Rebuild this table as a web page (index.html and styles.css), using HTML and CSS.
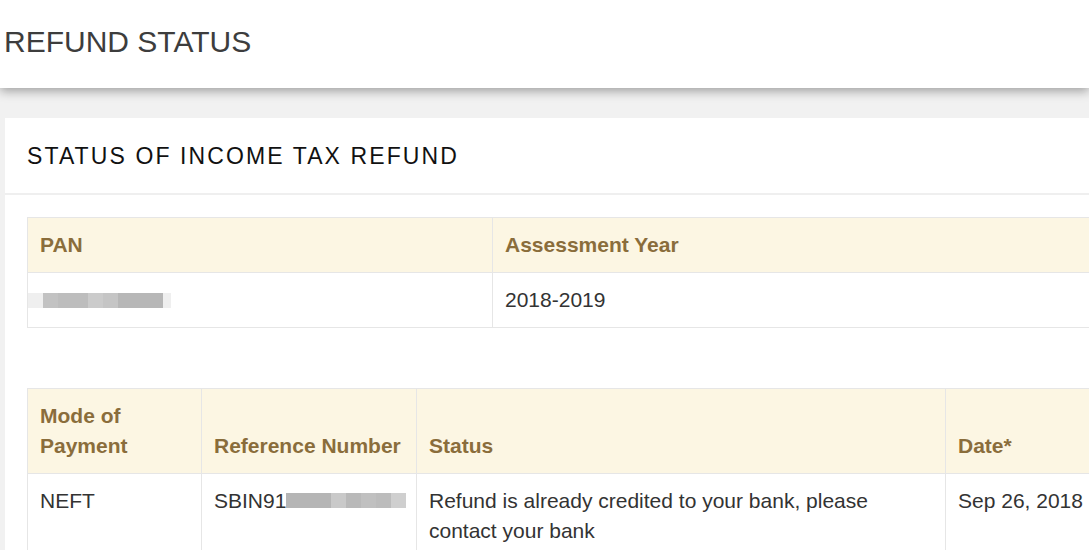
FILE: index.html
```html
<!DOCTYPE html>
<html>
<head>
<meta charset="utf-8">
<title>Refund Status</title>
<link rel="stylesheet" href="styles.css">
</head>
<body>
<header class="page-header">
  <h1 class="page-title">REFUND STATUS</h1>
</header>
<main class="page-main">
  <section class="card">
    <div class="card-header">
      <h2 class="card-title">STATUS OF INCOME TAX REFUND</h2>
    </div>
    <div class="card-body">
      <table class="info-table pan-table">
        <colgroup><col class="c-pan"><col></colgroup>
        <thead>
          <tr><th>PAN</th><th>Assessment Year</th></tr>
        </thead>
        <tbody>
          <tr>
            <td><span class="blur pan-blur"><i class="b1"></i><i class="b2"></i><i class="b3"></i><i class="b4"></i><i class="b5"></i><i class="b6"></i><i class="b7"></i></span></td>
            <td>2018-2019</td>
          </tr>
        </tbody>
      </table>
      <table class="info-table pay-table">
        <colgroup><col class="c-mode"><col class="c-ref"><col class="c-status"><col></colgroup>
        <thead>
          <tr><th>Mode of<br>Payment</th><th>Reference Number</th><th>Status</th><th>Date*</th></tr>
        </thead>
        <tbody>
          <tr>
            <td>NEFT</td>
            <td class="ref">SBIN91<span class="blur ref-blur"><i class="r1"></i><i class="r2"></i><i class="r3"></i><i class="r4"></i><i class="r5"></i><i class="r6"></i></span></td>
            <td>Refund is already credited to your bank, please contact your bank</td>
            <td>Sep 26, 2018</td>
          </tr>
        </tbody>
      </table>
    </div>
  </section>
</main>
</body>
</html>
```
FILE: styles.css
```css
html, body {
  margin: 0;
  padding: 0;
  overflow: hidden;
}
body {
  background: #f1f1f1;
  font-family: "Liberation Sans", Arial, sans-serif;
  color: #333;
  width: 1089px;
  height: 550px;
}
.page-header {
  position: relative;
  z-index: 2;
  height: 88px;
  background: #fff;
  box-shadow: 0 3px 10px rgba(0, 0, 0, 0.35);
  box-sizing: border-box;
  padding: 25px 0 0 4px;
}
.page-title {
  margin: 0;
  font-weight: normal;
  font-size: 30px;
  line-height: 33px;
  color: #3d3d3d;
  letter-spacing: 0;
}
.page-main {
  padding: 30px 0 0 5px;
}
.card {
  width: 1140px;
  background: #fff;
}
.card-header {
  padding: 23px 22px 22px 22px;
  border-bottom: 2px solid #efefef;
}
.card-title {
  margin: 0;
  font-weight: normal;
  font-size: 23px;
  line-height: 30px;
  letter-spacing: 2.1px;
  color: #111;
}
.card-body {
  padding: 22px;
}
.info-table {
  width: 100%;
  border-collapse: collapse;
  table-layout: fixed;
  font-size: 21px;
  line-height: 30px;
}
.pan-table {
  margin-bottom: 60px;
}
.c-pan { width: 465px; }
.c-mode { width: 174px; }
.c-ref { width: 215px; }
.c-status { width: 529px; }
.info-table th,
.info-table td {
  border: 1px solid #e6e6e6;
  padding: 12px;
  text-align: left;
}
.info-table th {
  background: #fcf6e3;
  color: #8a6d3b;
  font-weight: bold;
  vertical-align: bottom;
}
.info-table td {
  vertical-align: top;
  color: #333;
}
.info-table td.ref {
  white-space: nowrap;
  padding-right: 0;
}
.blur {
  display: inline-flex;
  height: 15px;
  vertical-align: baseline;
}
.blur i {
  display: block;
  width: 15px;
  height: 15px;
}
.pan-blur {
  margin-left: -12px;
  position: relative;
  top: 1px;
}
.b1 { background: #efefef; }
.b2 { background: #c2c2c2; }
.b3 { background: #bdbdbd; width: 30px !important; }
.b4 { background: #cbcbcb; }
.b5 { background: #c5c5c5; }
.b6 { background: #b7b7b7; width: 45px !important; }
.b7 { background: #efefef; width: 8px !important; }
.r1 { background: #b5b5b5; width: 45px !important; }
.r2 { background: #c9c9c9; }
.r3 { background: #b9b9b9; }
.r4 { background: #c0c0c0; }
.r5 { background: #bcbcbc; }
.r6 { background: #cfcfcf; }
```
